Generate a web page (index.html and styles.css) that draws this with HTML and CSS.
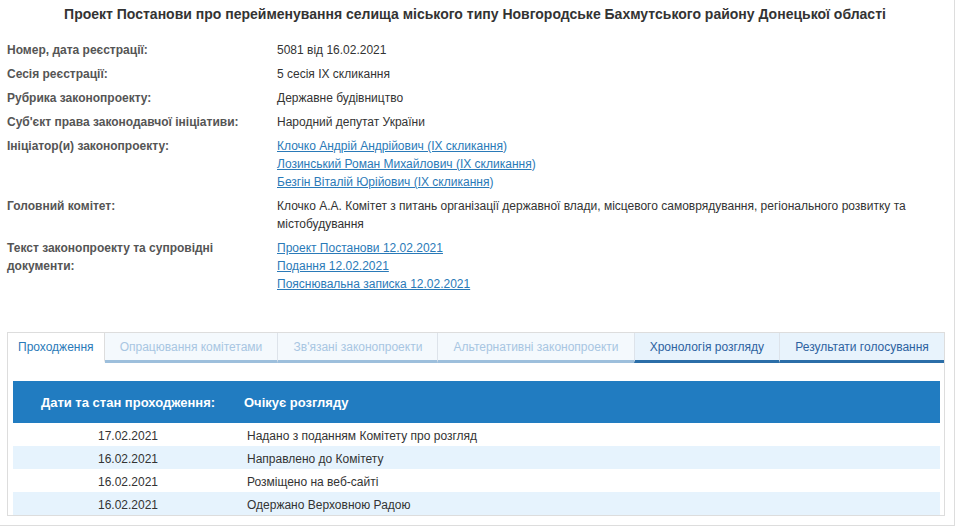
FILE: index.html
```html
<!DOCTYPE html>
<html lang="uk">
  <head>
    <meta charset="UTF-8" />
    <meta name="viewport" content="width=device-width, initial-scale=1.0" />
    <title>Картка законопроекту</title>
    <link rel="stylesheet" href="styles.css">
  </head>
  <body>
    <div class="page">
      <h1 class="bill-title">
        Проект Постанови про перейменування селища міського типу Новгородське Бахмутського району Донецької області
      </h1>

      <div class="bill-info">
        <div class="info-label">Номер, дата реєстрації:</div>
        <div class="info-value">5081 від 16.02.2021</div>

        <div class="info-label">Сесія реєстрації:</div>
        <div class="info-value">5 сесія IX скликання</div>

        <div class="info-label">Рубрика законопроекту:</div>
        <div class="info-value">Державне будівництво</div>

        <div class="info-label">Суб'єкт права законодавчої ініціативи:</div>
        <div class="info-value">Народний депутат України</div>

        <div class="info-label">Ініціатор(и) законопроекту:</div>
        <div class="info-value">
          <div class="link-line"><a href="#">Клочко Андрій Андрійович (IX скликання</a>)</div>
          <div class="link-line"><a href="#">Лозинський Роман Михайлович (IX скликання</a>)</div>
          <div class="link-line"><a href="#">Безгін Віталій Юрійович (IX скликання</a>)</div>
        </div>

        <div class="info-label">Головний комітет:</div>
        <div class="info-value">
          Клочко А.А. Комітет з питань організації державної влади, місцевого самоврядування, регіонального розвитку та містобудування
        </div>

        <div class="info-label">Текст законопроекту та супровідні документи:</div>
        <div class="info-value">
          <div class="link-line"><a href="#">Проект Постанови 12.02.2021</a></div>
          <div class="link-line"><a href="#">Подання 12.02.2021</a></div>
          <div class="link-line"><a href="#">Пояснювальна записка 12.02.2021</a></div>
        </div>
      </div>

      <div class="tabs-panel">
        <ul class="tabs">
          <li class="tab active">Проходження</li>
          <li class="tab disabled">Опрацювання комітетами</li>
          <li class="tab disabled">Зв'язані законопроекти</li>
          <li class="tab disabled">Альтернативні законопроекти</li>
          <li class="tab">Хронологія розгляду</li>
          <li class="tab">Результати голосування</li>
        </ul>

        <div class="tab-body">
          <table class="flow-table">
            <thead>
              <tr>
                <th class="col-date">Дати та стан проходження:</th>
                <th class="col-state">Очікує розгляду</th>
              </tr>
            </thead>
            <tbody>
              <tr>
                <td class="col-date">17.02.2021</td>
                <td class="col-state">Надано з поданням Комітету про розгляд</td>
              </tr>
              <tr>
                <td class="col-date">16.02.2021</td>
                <td class="col-state">Направлено до Комітету</td>
              </tr>
              <tr>
                <td class="col-date">16.02.2021</td>
                <td class="col-state">Розміщено на веб-сайті</td>
              </tr>
              <tr>
                <td class="col-date">16.02.2021</td>
                <td class="col-state">Одержано Верховною Радою</td>
              </tr>
            </tbody>
          </table>
        </div>
      </div>
    </div>
  </body>
</html>
```

FILE: styles.css
```css
body {
  font-family: "Liberation Sans", Arial, sans-serif;
  font-size: 12px;
  color: #333;
  background-color: #fff;
  margin: 0;
  padding: 0;
}

.page {
  width: 955px;
  height: 526px;
  box-sizing: border-box;
  border-right: 1px solid #ddd;
  border-bottom: 1px solid #ddd;
  padding: 0 11px 0 7px;
}

.bill-title {
  font-size: 14px;
  line-height: 20px;
  font-weight: bold;
  color: #333;
  text-align: center;
  margin: 0;
  padding: 4px 0 17px;
}

.bill-info {
  display: grid;
  grid-template-columns: 270px 1fr;
  row-gap: 6px;
  line-height: 18px;
}

.info-label {
  font-weight: bold;
  color: #555;
  padding-right: 20px;
}

.info-value {
  color: #333;
  padding-right: 20px;
}

.link-line {
  color: #2a7ab8;
}

.link-line a {
  color: #2a7ab8;
  text-decoration: underline;
}

.tabs-panel {
  margin-top: 39px;
  width: 938px;
  height: 184px;
  box-sizing: border-box;
  border: 1px solid #ddd;
  overflow: hidden;
}

.tabs {
  display: flex;
  list-style: none;
  margin: 0;
  padding: 0;
}

.tab {
  flex: 1 1 auto;
  height: 27px;
  line-height: 28px;
  padding: 0 10px;
  text-align: center;
  white-space: nowrap;
  font-size: 12px;
  color: #2d62a0;
  background-color: #e8f3fc;
  border-left: 1px solid #dde3ea;
  border-bottom: 3px solid #2b6ea8;
}

.tab:first-child {
  border-left: none;
}

.tab.active {
  color: #2a7ab8;
  background-color: #fff;
  border-bottom-color: #fff;
  border-right: 1px solid #ddd;
  flex-grow: 0;
}

.tab.active + .tab {
  border-left: none;
}

.tab.disabled {
  color: #a8c6e2;
  background-color: #f4f9fd;
  border-bottom-color: #9dbfdc;
}

.tab-body {
  padding: 18px 4px 0 5px;
}

.flow-table {
  width: 100%;
  border-collapse: collapse;
}

.flow-table th {
  background-color: #217cc1;
  color: #fff;
  font-size: 13px;
  font-weight: bold;
  height: 42px;
  text-align: left;
  padding: 0;
}

.flow-table th.col-date {
  text-align: center;
  width: 230px;
}

.flow-table td {
  height: 15px;
  line-height: 15px;
  padding: 6px 0 2px;
  color: #333;
}

.flow-table td.col-date {
  text-align: center;
}

.flow-table th.col-state {
  padding-left: 1px;
}

.flow-table td.col-state {
  padding-left: 4px;
}

.flow-table tbody tr:nth-child(even) {
  background-color: #e6f3fd;
}
```
